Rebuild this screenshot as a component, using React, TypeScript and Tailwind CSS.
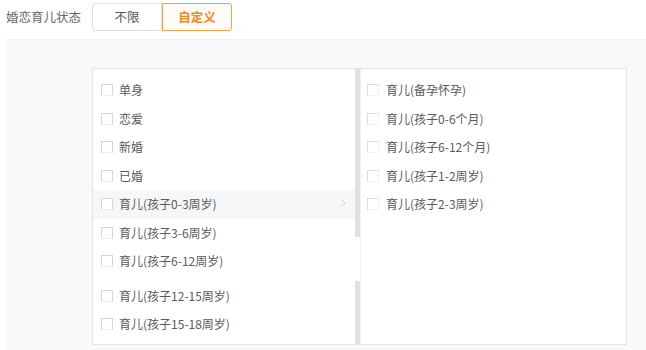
import React from "react";

const font = { fontFamily: '"Noto Sans CJK SC", "Noto Sans", sans-serif' };

function Box({ right }: { right?: boolean }) {
  return (
    <span
      className={
        right
          ? "inline-block w-[12px] h-[12px] border border-t-[#dcdcdc] border-l-[#dcdcdc] border-r-[#f3f3f3] border-b-[#f3f3f3] bg-white shrink-0"
          : "inline-block w-[12px] h-[12px] border border-t-[#d6d6d6] border-l-[#d6d6d6] border-r-[#d6d6d6] border-b-[#eeeeee] bg-white shrink-0"
      }
    />
  );
}

const leftItems = [
  "单身",
  "恋爱",
  "新婚",
  "已婚",
  "育儿(孩子0-3周岁)",
  "育儿(孩子3-6周岁)",
  "育儿(孩子6-12周岁)",
  "育儿(孩子12-15周岁)",
  "育儿(孩子15-18周岁)",
];

const rightItems = [
  "育儿(备孕怀孕)",
  "育儿(孩子0-6个月)",
  "育儿(孩子6-12个月)",
  "育儿(孩子1-2周岁)",
  "育儿(孩子2-3周岁)",
];

export default function App() {
  return (
    <div className="w-[646px] h-[350px] bg-white overflow-hidden" style={font}>
      <div className="flex items-center pl-[6px] pt-[3px] h-[31px]">
        <div className="w-[86px] text-[12.5px] text-[#666]">婚恋育儿状态</div>
        <div className="flex">
          <div className="w-[70px] h-[28px] flex items-center justify-center border border-[#dcdfe6] rounded-l-[3px] text-[12.5px] text-[#555] bg-white">
            不限
          </div>
          <div className="w-[70px] h-[28px] flex items-center justify-center border border-[#f5a24a] rounded-r-[3px] text-[12.5px] font-bold text-[#f08a1c] bg-[#fffcf8]">
            自定义
          </div>
        </div>
      </div>
      <div className="ml-[7px] mt-[8px] h-[311px] bg-[#f8f9fb] border-t border-[#f0f1f4] pl-[85px] pt-[28px]">
        <div className="w-[535px] h-[277px] bg-white border border-[#e3e5ea] flex">
          <div className="w-[262px] pt-[7px]">
            {leftItems.map((t, i) => (
              <div
                key={t}
                className={
                  "h-[28.5px] flex items-center pl-[8px] pr-[9px] text-[12px] text-[#5a5a5a] " +
                  (i === 4 ? "bg-[#f6f7f9] " : "") +
                  (i === 7 ? "mt-[6px] " : "")
                }
              >
                <Box />
                <span className="ml-[6px] flex-1">{t}</span>
                {i === 4 && (
                  <svg width="5" height="8" viewBox="0 0 5 8" className="mt-[-2px]">
                    <path d="M0.5 0.5 L4 4 L0.5 7.5" fill="none" stroke="#cfcfcf" strokeWidth="1" />
                  </svg>
                )}
              </div>
            ))}
          </div>
          <div className="w-[5px] flex flex-col">
            <div className="h-[168px] bg-[#e1e1e1]" />
            <div className="h-[44px] bg-white" />
            <div className="flex-1 bg-[#e1e1e1]" />
          </div>
          <div className="flex-1 border-l border-[#f0f0f0] pt-[7px]">
            {rightItems.map((t) => (
              <div key={t} className="h-[28.5px] flex items-center pl-[6px] text-[12px] text-[#5a5a5a]">
                <Box right />
                <span className="ml-[7px]">{t}</span>
              </div>
            ))}
          </div>
        </div>
      </div>
    </div>
  );
}
